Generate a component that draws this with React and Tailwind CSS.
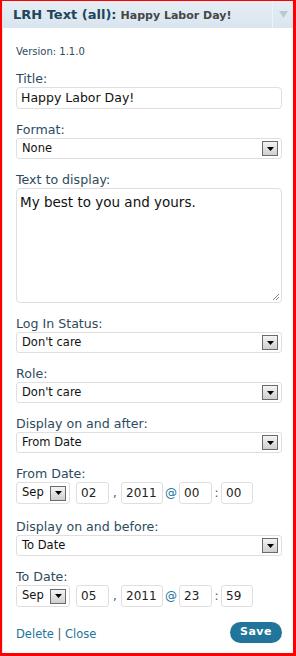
import React from "react";

const font = { fontFamily: '"DejaVu Sans", Verdana, sans-serif' };

function Arrow() {
  return (
    <span className="flex h-[15px] w-[16px] items-center justify-center border border-[#6b6b6b] bg-gradient-to-b from-[#f4f4f4] to-[#cfcfcf]">
      <svg width="7" height="4" viewBox="0 0 7 4"><path d="M0 0h7L3.5 4z" fill="#000" /></svg>
    </span>
  );
}

function Select({ value }) {
  return (
    <div className="flex h-[21px] items-center justify-between rounded-[3px] border border-[#dfdfdf] bg-white pl-[5px] pr-[3px] text-[11.5px] text-[#111]">
      <span>{value}</span>
      <Arrow />
    </div>
  );
}

function Label({ children }) {
  return <div className="mb-[1px] text-[12.6px] leading-[14px] text-[#2d4b5e]">{children}</div>;
}

function Box({ w, children }) {
  return (
    <div className={`flex h-[22px] items-center rounded-[3px] border border-[#dfdfdf] bg-white pl-[4px] text-[12px] text-[#222] ${w}`}>
      {children}
    </div>
  );
}

function DateRow({ day, year, hh, mm }) {
  return (
    <div className="flex items-center text-[12px] text-[#555]">
      <div className="flex h-[22px] w-[54px] items-center justify-between rounded-[3px] border border-[#dfdfdf] bg-white pl-[5px] pr-[3px] text-[11.5px] text-[#111]">
        <span>Sep</span>
        <Arrow />
      </div>
      <div className="ml-[6px]"><Box w="w-[33px]">{day}</Box></div>
      <span className="mx-[3px] w-[6px] text-center">,</span>
      <Box w="w-[42px]">{year}</Box>
      <span className="mx-[2px] text-[#21759b]">@</span>
      <Box w="w-[33px]">{hh}</Box>
      <span className="mx-[2px] w-[5px] text-center">:</span>
      <Box w="w-[32px]">{mm}</Box>
    </div>
  );
}

export default function App() {
  return (
    <div style={font} className="h-[656px] w-[296px] border-b-[3px] border-l-[2px] border-r-[3px] border-t-[1px] border-[#ff0000] bg-white">
      <div className="flex h-full flex-col border-l border-[#e3e3e3]">
        <div className="flex h-[27px] items-center bg-gradient-to-b from-[#e6eef5] to-[#d9e5ef]">
          <div className="flex flex-1 items-baseline pl-[10px] font-bold">
            <span className="text-[13px] text-[#21455b]">LRH Text (all):</span>
            <span className="ml-[4px] text-[11px] text-[#464646]">Happy Labor Day!</span>
          </div>
          <div className="flex h-full w-[21px] items-center justify-center border-l border-[#eef3f8]">
            <svg width="9" height="7" viewBox="0 0 9 7"><path d="M0 0h9L4.5 7z" fill="#b9c9d6" /></svg>
          </div>
        </div>
        <div className="flex flex-col pl-[13px] pr-[11px]">
          <div className="mt-[18px] text-[10px] leading-[12px] text-[#2d4b5e]">Version: 1.1.0</div>
          <div className="mt-[14px]">
            <Label>Title:</Label>
            <div className="flex h-[22px] items-center rounded-[4px] border border-[#dfdfdf] pl-[4px] text-[12.5px] text-[#111]">Happy Labor Day!</div>
          </div>
          <div className="mt-[14px]">
            <Label>Format:</Label>
            <Select value="None" />
          </div>
          <div className="mt-[14px]">
            <Label>Text to display:</Label>
            <div className="relative h-[115px] rounded-[4px] border border-[#dfdfdf] pl-[3px] pt-[3px] text-[13.5px] text-[#111]">
              My best to you and yours.
              <svg className="absolute bottom-[1px] right-[1px]" width="8" height="8" viewBox="0 0 8 8"><path d="M7 1L1 7M7 4L4 7" stroke="#888" strokeWidth="1" /></svg>
            </div>
          </div>
          <div className="mt-[14px]">
            <Label>Log In Status:</Label>
            <Select value="Don't care" />
          </div>
          <div className="mt-[14px]">
            <Label>Role:</Label>
            <Select value="Don't care" />
          </div>
          <div className="mt-[14px]">
            <Label>Display on and after:</Label>
            <Select value="From Date" />
          </div>
          <div className="mt-[14px]">
            <Label>From Date:</Label>
            <DateRow day="02" year="2011" hh="00" mm="00" />
          </div>
          <div className="mt-[16px]">
            <Label>Display on and before:</Label>
            <Select value="To Date" />
          </div>
          <div className="mt-[14px]">
            <Label>To Date:</Label>
            <DateRow day="05" year="2011" hh="23" mm="59" />
          </div>
          <div className="mt-[15px] flex items-center justify-between">
            <div className="pt-[4px] text-[11.5px] text-[#21759b]">
              Delete <span className="text-[#555]">|</span> Close
            </div>
            <div className="flex h-[21px] w-[52px] items-center justify-center rounded-full bg-[#21759b] text-[11px] font-bold tracking-[0.5px] text-white">Save</div>
          </div>
        </div>
      </div>
    </div>
  );
}
